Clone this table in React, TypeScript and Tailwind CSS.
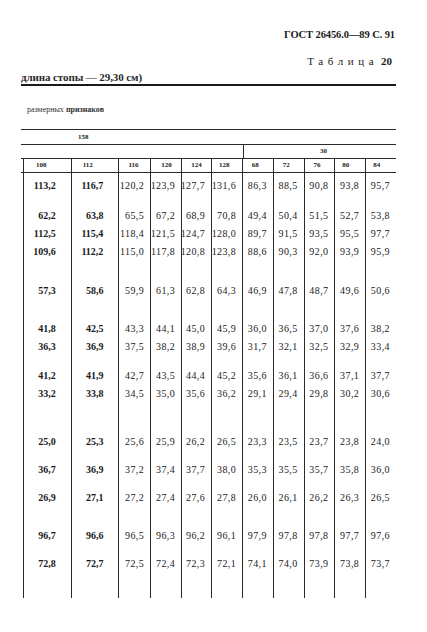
import React from 'react';

const COLS = [48, 48, 32, 31, 30, 31, 31, 31, 31, 31, 31];
const HEAD = ['108', '112', '116', '120', '124', '128', '68', '72', '76', '80', '84'];
const HEAD_PL = [12, 11, 9, 10, 9, 7, 9, 9, 9, 7, 7];

const ROWS = [
  ['113,2', '116,7', '120,2', '123,9', '127,7', '131,6', '86,3', '88,5', '90,8', '93,8', '95,7'],
  ['62,2', '63,8', '65,5', '67,2', '68,9', '70,8', '49,4', '50,4', '51,5', '52,7', '53,8'],
  ['112,5', '115,4', '118,4', '121,5', '124,7', '128,0', '89,7', '91,5', '93,5', '95,5', '97,7'],
  ['109,6', '112,2', '115,0', '117,8', '120,8', '123,8', '88,6', '90,3', '92,0', '93,9', '95,9'],
  ['57,3', '58,6', '59,9', '61,3', '62,8', '64,3', '46,9', '47,8', '48,7', '49,6', '50,6'],
  ['41,8', '42,5', '43,3', '44,1', '45,0', '45,9', '36,0', '36,5', '37,0', '37,6', '38,2'],
  ['36,3', '36,9', '37,5', '38,2', '38,9', '39,6', '31,7', '32,1', '32,5', '32,9', '33,4'],
  ['41,2', '41,9', '42,7', '43,5', '44,4', '45,2', '35,6', '36,1', '36,6', '37,1', '37,7'],
  ['33,2', '33,8', '34,5', '35,0', '35,6', '36,2', '29,1', '29,4', '29,8', '30,2', '30,6'],
  ['25,0', '25,3', '25,6', '25,9', '26,2', '26,5', '23,3', '23,5', '23,7', '23,8', '24,0'],
  ['36,7', '36,9', '37,2', '37,4', '37,7', '38,0', '35,3', '35,5', '35,7', '35,8', '36,0'],
  ['26,9', '27,1', '27,2', '27,4', '27,6', '27,8', '26,0', '26,1', '26,2', '26,3', '26,5'],
  ['96,7', '96,6', '96,5', '96,3', '96,2', '96,1', '97,9', '97,8', '97,8', '97,7', '97,6'],
  ['72,8', '72,7', '72,5', '72,4', '72,3', '72,1', '74,1', '74,0', '73,9', '73,8', '73,7'],
];

// gap above each row (px), mirrors the uneven spacing of the printed table
const ROW_MT = [4, 12, 0, 0, 21, 20, 0, 11, 0, 30, 10, 10, 20, 10];

const serif = { fontFamily: '"Liberation Serif", "DejaVu Serif", serif' };

export default function App() {
  return (
    <div className="w-[427px] h-[632px] bg-white text-[#1a1a1a] overflow-hidden" style={serif}>
      <div className="pt-[29px] pr-[32px] flex flex-col items-end">
        <div className="h-[12px] leading-[12px] text-[10.5px] font-bold tracking-[-0.1px]">ГОСТ 26456.0—89 С. 91</div>
        <div className="mt-[14px] h-[12px] leading-[12px] text-[11px] pr-[3px]">
          <span className="tracking-[4.6px]">Таблица</span> <span className="font-bold">20</span>
        </div>
      </div>

      <div className="ml-[21px] w-[375px]">
        <div className="mt-[4px] h-[12px] leading-[12px] text-[11px] font-bold text-[#2a2a2a] tracking-[-0.1px]">длина стопы — 29,30 см)</div>
        <div className="mt-[1px] h-[2px] bg-[#1a1a1a]" />

        <div className="mt-[19px] h-[10px] leading-[10px] text-[8px] pl-[6px] text-[#333]">
          размерных <span className="font-bold">признаков</span>
        </div>
        <div className="mt-[14px] h-px bg-[#2a2a2a]" />

        <div className="h-[14px] flex items-center pl-[57px] text-[7px] font-bold">158</div>
        <div className="h-px bg-[#2a2a2a]" />

        <div className="h-[13px] flex">
          <div className="w-[222px]" />
          <div className="flex-1 border-l border-[#2a2a2a] flex items-center pl-[76px] text-[7px] font-bold">30</div>
        </div>
        <div className="h-px bg-[#2a2a2a]" />

        <div className="ml-[2px] h-[13px] flex">
          {HEAD.map((h, i) => (
            <div
              key={h}
              className="h-full flex items-center text-[7px] font-bold border-l border-[#2a2a2a]"
              style={{ width: COLS[i], paddingLeft: HEAD_PL[i] }}
            >
              {h}
            </div>
          ))}
        </div>
        <div className="h-px bg-[#2a2a2a]" />

        <div className="ml-[2px] flex">
          {COLS.map((w, c) => (
            <div
              key={c}
              className={`border-l border-[#2a2a2a] flex flex-col items-end pb-[25px] ${c < 2 ? 'font-bold text-[#1a1a1a] pr-[15px]' : 'text-[#222] pr-[6px] tracking-[0.4px]'}`}
              style={{ width: w }}
            >
              {ROWS.map((r, i) => (
                <div key={i} className="h-[18px] leading-[18px] text-[10px]" style={{ marginTop: ROW_MT[i] }}>
                  {r[c]}
                </div>
              ))}
            </div>
          ))}
        </div>
      </div>
    </div>
  );
}
